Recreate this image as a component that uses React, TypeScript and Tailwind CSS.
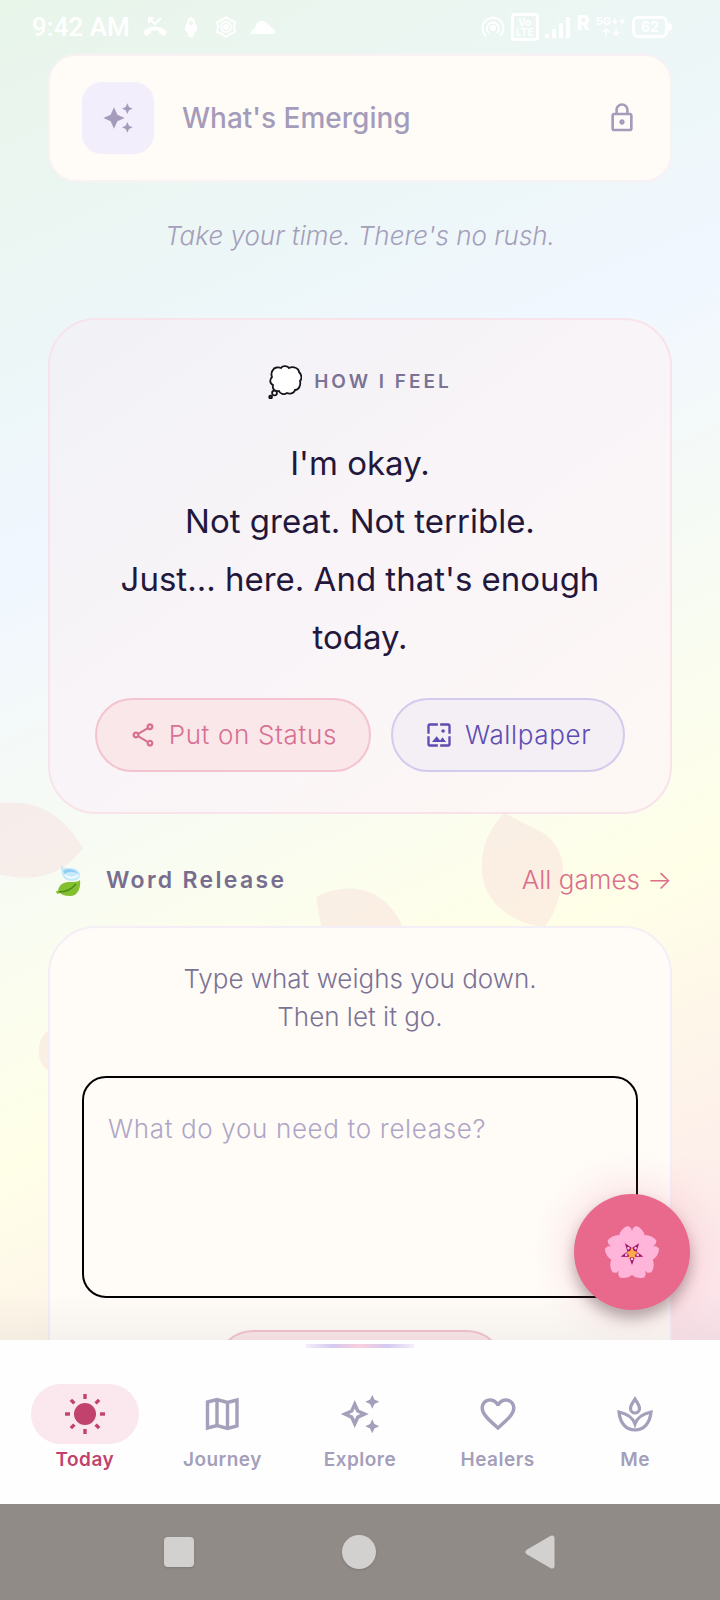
import React from 'react';
import {
  MdAutoAwesome,
  MdFavoriteBorder,
  MdLockOutline,
  MdOutlineAutoAwesome,
  MdOutlineShare,
  MdWallpaper,
} from 'react-icons/md';

function StatusBar() {
  return (
    <header className="flex h-[54px] shrink-0 items-center justify-between pr-12 pl-8 text-white">
      <div className="flex items-center gap-3">
        <span className="font-[Roboto] text-[26px] leading-8 font-medium">9:42 AM</span>
        <svg width="26" height="20" viewBox="0 0 26 20" fill="none" stroke="currentColor" strokeWidth="2">
          <path d="M7 1l6 6 6-6M7 6V1h5" />
          <path d="M1 15c6-7 18-7 24 0l-3 4-5-3v-2c-2-1-6-1-8 0v2l-5 3z" fill="currentColor" stroke="none" />
        </svg>
        <svg width="22" height="22" viewBox="0 0 22 22" fill="currentColor">
          <path fillRule="evenodd" d="M11 1c3 1 4 3 4 6l2 3v4l-2 2-2 5h-4l-2-5-2-2v-4l2-3c0-3 1-5 4-6zm0 4a2 2 0 100 4 2 2 0 000-4z" />
        </svg>
        <svg width="24" height="24" viewBox="0 0 24 24" fill="none" stroke="currentColor" strokeWidth="2">
          <path d="M12 2l4 3 5 2-1 5 1 5-5 2-4 3-4-3-5-2 1-5-1-5 5-2z" />
          <circle cx="12" cy="12" r="5" />
          <circle cx="12" cy="12" r="2" fill="currentColor" />
        </svg>
        <svg width="26" height="18" viewBox="0 0 26 18" fill="currentColor">
          <path d="M1 16c-1-3 2-5 4-5 1-9 9-11 13-4 2-1 3 1 3 3 3 0 5 3 4 6z" />
        </svg>
      </div>
      <div className="flex items-center gap-1.5">
        <svg width="24" height="24" viewBox="0 0 24 24" fill="none" stroke="currentColor" strokeWidth="2">
          <circle cx="12" cy="13" r="2" fill="currentColor" />
          <path d="M8 18a6 6 0 118 0M5 21a10.500 10.500 0 1114 0" />
        </svg>
        <span className="flex h-7 w-7 flex-col items-center justify-center rounded-sm border-3 border-white text-[10px] leading-[10px] font-bold">
          <span>Vo</span>
          <span>LTE</span>
        </span>
        <svg width="26" height="22" viewBox="0 0 26 22" fill="currentColor">
          <path d="M0 18h4v4H0zM7 13h4v9H7zM14 7h4v15h-4zM21 1h4v21h-4z" />
        </svg>
        <span className="-mt-2 font-[Roboto] text-xl leading-6 font-black">R</span>
        <span className="flex flex-col items-center text-[11px] leading-[11px] font-bold">
          <span>5G++</span>
          <span>↑↓</span>
        </span>
        <span className="flex items-center">
          <span className="flex h-[22px] w-9 items-center justify-center rounded-md border-3 border-white text-sm leading-4 font-bold">
            62
          </span>
          <span className="h-2 w-1 rounded-r-sm bg-white" />
        </span>
      </div>
    </header>
  );
}

function ThoughtBubble() {
  return (
    <svg width="34" height="34" viewBox="0 0 34 34" fill="#fff" stroke="#17131c" strokeWidth="1.8" role="img" aria-label="Thought bubble">
      <path d="M5 5c1-3 6-3 8-2 2-3 7-2 8 0 4-2 10 0 10 4 3 3 3 7 1 9 1 4-1 9-5 9-1 4-6 4-8 3-3 2-7 1-8-2-4 1-7-2-6-6-4-2-3-6-1-8-1-3-1-5 1-7z" />
      <circle cx="6.500" cy="28" r="2.400" />
      <circle cx="2.600" cy="32" r="1.400" fill="#5f5a66" />
    </svg>
  );
}

function FlutteringLeaves() {
  return (
    <svg width="26" height="34" viewBox="0 0 26 34" role="img" aria-label="Leaves">
      <path d="M5 1c1 4 3 4 8 4 9 0 13 5 10 10-2 4-12 4-15 0-3-4-3-10-3-14z" fill="#c6e9fb" />
      <path d="M7 8c4-3 13-2 15 3-4-3-10-3-13 0z" fill="#8fcdf2" />
      <path d="M9 12c4 4 10 3 13 0" stroke="#f4fbff" strokeWidth="2" fill="none" />
      <path d="M2 28c1-7 6-9 12-9 4 0 8 0 10-2 1 8-2 16-10 16-5 0-8-1-10-3l-3 1-1-3z" fill="#83bf2e" />
      <path d="M3 29c7 0 13-3 17-8" stroke="#4c8c1c" strokeWidth="1.400" fill="none" />
    </svg>
  );
}

const petalAngles = [0, 72, 144, 216, 288];

function Blossom() {
  return (
    <svg width="56" height="56" viewBox="0 0 56 56" role="img" aria-label="Cherry blossom">
      {petalAngles.map((angle) => (
        <g key={angle} transform={`rotate(${angle} 28 29)`}>
          <path d="M28 29C20 26 14 19 15 12c1-5 5-9 9-10l3 2 1 3 1-3 3-2c4 1 8 5 9 10 1 7-5 14-13 17z" fill="#ffb5da" />
          <path d="M28 29L37 17" stroke="#f79cc8" strokeWidth="0.800" />
        </g>
      ))}
      {petalAngles.map((angle) => (
        <g key={angle} transform={`rotate(${angle} 28 29)`}>
          <path d="M24 30L28 41l4-11z" fill="#a3126d" />
          <circle cx="28" cy="35" r="1.300" fill="#ffc6e2" />
        </g>
      ))}
      <path d="M28 23l2 4 4 1-3 3 1 4-4-2-4 2 1-4-3-3 4-1z" fill="#ffa94d" />
    </svg>
  );
}

function SunIcon() {
  return (
    <svg width="42" height="42" viewBox="0 0 42 42" fill="currentColor">
      <circle cx="21" cy="21" r="11" />
      {[0, 45, 90, 135, 180, 225, 270, 315].map((angle) => (
        <rect key={angle} x="19.300" y="1" width="3.400" height="5" transform={`rotate(${angle} 21 21)`} />
      ))}
    </svg>
  );
}

function MapIcon() {
  return (
    <svg width="42" height="42" viewBox="0 0 42 42" fill="none" stroke="currentColor" strokeWidth="3.400">
      <path d="M6.500 9L16 6.500l10.500 3L36 7v26l-9.500 2.500-10.500-3L6.500 35zM16 6.500v26M26.500 9.500v26" />
    </svg>
  );
}

function LotusIcon() {
  return (
    <svg width="42" height="42" viewBox="0 0 42 42" fill="none" stroke="currentColor" strokeWidth="3.200">
      <path d="M21 6c2.500 4 4.500 6.500 4.500 9.500S23 20 21 20s-4.500-1.500-4.500-4.500S18.500 10 21 6z" />
      <path d="M21 31c-2-6-7-10-16-12 1 11 7 18 16 18s15-7 16-18c-9 2-14 6-16 12z" />
    </svg>
  );
}

const tabs = [
  { label: 'Today', icon: <SunIcon />, active: true },
  { label: 'Journey', icon: <MapIcon />, active: false },
  { label: 'Explore', icon: <MdOutlineAutoAwesome size={42} />, active: false },
  { label: 'Healers', icon: <MdFavoriteBorder size={42} />, active: false },
  { label: 'Me', icon: <LotusIcon />, active: false },
];

function TabBar() {
  return (
    <nav className="flex h-[164px] shrink-0 flex-col bg-[#fffeff] px-4 pt-1">
      <div className="mx-auto h-1 w-[108px] bg-[linear-gradient(90deg,#f3eefb_0%,#d5c9f0_25%,#f8cfdd_50%,#d5c9f0_75%,#f3eefb_100%)]" />
      <ul className="grid grid-cols-5 pt-9">
        {tabs.map((tab) => (
          <li key={tab.label}>
            <a
              href="#"
              className={
                tab.active
                  ? 'flex flex-col items-center text-[#c1436d]'
                  : 'flex flex-col items-center text-[#a49fba]'
              }
            >
              <span
                className={
                  tab.active
                    ? 'flex h-[60px] w-[108px] items-center justify-center rounded-full bg-[#fbe7ee]'
                    : 'flex h-[60px] w-[108px] items-center justify-center'
                }
              >
                {tab.icon}
              </span>
              <span className="text-[19px] leading-8 font-semibold tracking-wide">{tab.label}</span>
            </a>
          </li>
        ))}
      </ul>
    </nav>
  );
}

function SystemBar() {
  return (
    <footer className="flex h-24 shrink-0 items-center justify-around bg-[#918b88] px-[90px] text-[#d3d1cf]">
      <button aria-label="Recent apps">
        <span className="block h-[30px] w-[30px] rounded-sm bg-current shadow-sm" />
      </button>
      <button aria-label="Home">
        <span className="block h-[34px] w-[34px] rounded-full bg-current shadow-sm" />
      </button>
      <button aria-label="Back">
        <svg width="32" height="36" viewBox="0 0 32 36" fill="currentColor" stroke="currentColor" strokeWidth="5" strokeLinejoin="round">
          <path d="M4 18L28 4v28z" />
        </svg>
      </button>
    </footer>
  );
}

function FloatingPetals() {
  return (
    <svg className="absolute inset-0 h-full w-full" fill="#f7d4d6" fillOpacity="0.35">
      <path d="M-20 806C20 798 54 800 83 848C58 882 20 884-20 868z" />
      <path d="M504 813L545 834C560 846 566 864 562 882C560 900 552 920 544 927C512 924 484 902 482 872C480 850 488 830 504 813z" />
      <path d="M316 897C340 884 384 880 404 930L322 930z" />
      <path d="M50 1030C36 1036 34 1064 50 1072z" />
    </svg>
  );
}

export default function App() {
  return (
    <div className="relative flex h-screen flex-col overflow-hidden bg-[linear-gradient(156deg,#e8f5e9_0%,#f0f7ff_30%,#ffffe8_61%,#fce4ec_87%,#f6dcec_100%)] font-[Inter,sans-serif]">
      <FloatingPetals />
      <StatusBar />

      <div className="relative flex min-h-0 flex-1 flex-col">
        <main className="min-h-0 flex-1 overflow-hidden px-12">
          <section className="flex h-32 items-center rounded-[28px] border-2 border-[#f9f1f3] bg-[#fffcf8] px-8 text-[#a49cba]">
            <span className="flex h-[72px] w-[72px] items-center justify-center rounded-[20px] bg-[#f3eefb]">
              <MdAutoAwesome size={32} />
            </span>
            <h2 className="ml-7 flex-1 text-[28px] leading-9 font-medium">What's Emerging</h2>
            <MdLockOutline size={32} />
          </section>

          <p className="mt-9 text-center text-[26px] leading-9 font-light text-[#a49fba] italic">
            Take your time. There's no rush.
          </p>

          <section className="mt-16 flex flex-col items-center rounded-[48px] border-2 border-[#f8e3ea] bg-[linear-gradient(145deg,#f1f2f6_0%,#f9f4f8_50%,#fef8f4_100%)] px-11 pt-11 pb-10">
            <div className="flex items-center gap-3">
              <ThoughtBubble />
              <h3 className="text-[19px] leading-9 font-semibold tracking-[3px] text-[#7b7395]">HOW I FEEL</h3>
            </div>
            <p className="mt-[34px] text-center text-[33px] leading-[58px] text-[#23183c]">
              I'm okay.
              <br />
              Not great. Not terrible.
              <br />
              Just... here. And that's enough today.
            </p>
            <div className="mt-8 flex gap-5">
              <button className="flex h-[74px] items-center gap-3 rounded-full border-2 border-[#f3c3d0] bg-[#fae7ea] px-8 text-[26px] leading-9 font-light tracking-wide text-[#d96f91]">
                <MdOutlineShare size={28} />
                Put on Status
              </button>
              <button className="flex h-[74px] items-center gap-3 rounded-full border-2 border-[#d3cbee] bg-[#f4eff4] px-8 text-[26px] leading-9 font-light tracking-wide text-[#5d4cb3]">
                <MdWallpaper size={28} />
                Wallpaper
              </button>
            </div>
          </section>

          <div className="mt-12 flex items-center justify-between">
            <div className="flex items-center gap-6 pl-2">
              <FlutteringLeaves />
              <h3 className="text-[23px] leading-9 font-semibold tracking-widest text-[#776e8f]">Word Release</h3>
            </div>
            <a href="#" className="text-[26px] leading-9 font-light text-[#dc6f8b]">
              All games →
            </a>
          </div>

          <section className="mt-7 flex flex-col items-center rounded-t-[48px] border-2 border-[#f4eef7] bg-[#fffcf8] px-8 pt-8">
            <p className="text-center text-[26px] leading-[38px] font-light text-[#7b7395]">
              Type what weighs you down.
              <br />
              Then let it go.
            </p>
            <textarea
              aria-label="What do you need to release?"
              placeholder="What do you need to release?"
              className="mt-10 block h-[222px] w-full resize-none rounded-3xl border-2 border-black bg-transparent px-6 py-8 text-[26px] leading-[38px] font-light tracking-wide placeholder:text-[#aea6c6]"
            />
            <button
              aria-label="Release"
              className="mt-8 h-[74px] w-[288px] shrink-0 rounded-full border-2 border-[#f3c3d0] bg-[#fae7ea]"
            />
          </section>
        </main>

        {/* soft shade above the tab bar */}
        <div className="pointer-events-none absolute inset-x-0 bottom-0 h-12 bg-linear-to-t from-black/4 to-transparent" />

        <button
          aria-label="Open garden"
          className="absolute right-[30px] bottom-[30px] flex h-[116px] w-[116px] items-center justify-center rounded-full bg-[#e8698c] shadow-[0_0_50px_rgba(232,105,140,0.3),0_8px_14px_rgba(0,0,0,0.3)]"
        >
          <Blossom />
        </button>
      </div>

      <div className="relative">
        <TabBar />
        <SystemBar />
      </div>
    </div>
  );
}
